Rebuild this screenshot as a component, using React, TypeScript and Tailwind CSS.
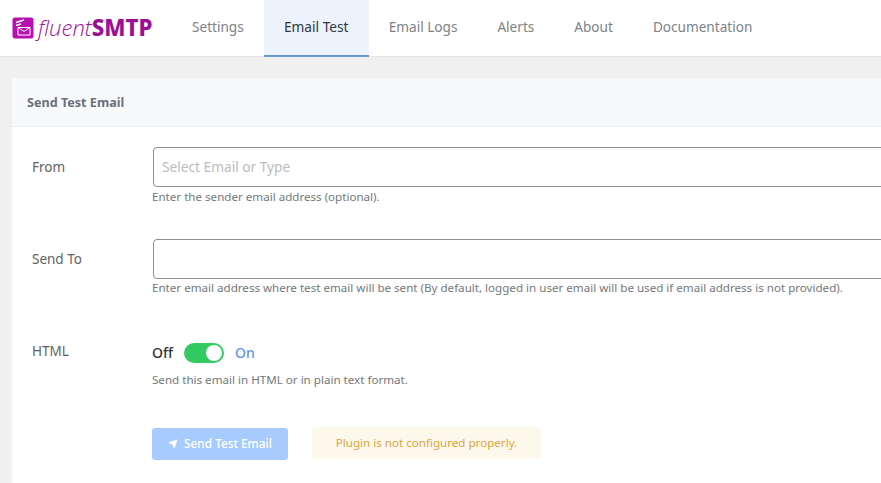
import { Send } from 'lucide-react'

const tabs = ['Settings', 'Email Test', 'Email Logs', 'Alerts', 'About', 'Documentation']

function Logo() {
  return (
    <div className="flex w-[160px] shrink-0 items-center gap-[4px] pb-[1px]">
      <svg width="22" height="22" viewBox="0 0 22 22" className="shrink-0">
        <rect x="0.5" y="0.5" width="21" height="21" rx="2.5" fill="#b70fb0" />
        <path d="M4 5.5 12 3M4 8.5 9 7" stroke="#fff" strokeWidth="1.4" fill="none" />
        <path d="M6 10.5h12v7.5H6zM6 10.5l6 4 6-4" stroke="#fff" strokeWidth="1" fill="none" />
      </svg>
      <span className="font-['Open_Sans'] text-[22px] leading-none font-light whitespace-nowrap text-[#a30f9c] italic">
        fluent
        <b className="font-['Noto_Sans'] text-[22.3px] font-extrabold text-[#9c0f95] not-italic">SMTP</b>
      </span>
    </div>
  )
}

export default function App() {
  return (
    <div className="h-screen w-full overflow-hidden bg-[#f0f0f1] font-['Noto_Sans',sans-serif] text-[13.5px]">
      <header className="flex h-[57px] items-stretch border-b border-[#e5e5e5] bg-white pl-3">
        <Logo />
        {tabs.map((tab) =>
          tab === 'Email Test' ? (
            <div
              key={tab}
              className="-mb-px flex w-[105px] items-center justify-center border-b-2 border-[#6a97d4] bg-[#ecf3fc] pb-[1px] text-[13.7px] text-[#2f3640]"
            >
              {tab}
            </div>
          ) : (
            <div key={tab} className="flex items-center px-5 pb-[1px] text-[13.6px] whitespace-nowrap text-[#7d8288]">
              {tab}
            </div>
          )
        )}
      </header>

      <main className="pt-[21px] pl-3">
        <section className="h-[420px] w-[900px] rounded-tl-[4px] bg-white">
          <h1 className="flex h-[49px] items-center border-b border-[#eceef0] bg-[#f8f9fb] pt-[2px] pl-[15px] text-[12.6px] font-bold text-[#69707f]">
            Send Test Email
          </h1>

          <div className="pt-5 pl-5">
            <div className="flex">
              <label className="w-[121px] pt-[10px] text-[#606266]">From</label>
              <div className="flex-1">
                <div className="flex h-10 items-center rounded-[4px] border border-[#8c8f94] pl-2 text-[13.7px] text-[#b9bcc2]">
                  Select Email or Type
                </div>
                <p className="-ml-px text-[11.6px] leading-5 text-[#73787e]">
                  Enter the sender email address (optional).
                </p>
              </div>
            </div>

            <div className="mt-[32px] flex">
              <label className="w-[121px] pt-[10px] text-[#606266]">Send To</label>
              <div className="flex-1">
                <div className="h-10 rounded-[4px] border border-[#8c8f94]" />
                <p className="-mt-px -ml-px text-[11.6px] leading-5 whitespace-nowrap text-[#73787e]">
                  Enter email address where test email will be sent (By default, logged in user email will be used if email address is not provided).
                </p>
              </div>
            </div>

            <div className="mt-[45px] flex">
              <label className="-mt-[2px] w-[120px] text-[#606266]">HTML</label>
              <div>
                <div className="flex h-5 items-center text-[14px]">
                  <span className="-mt-[2px] w-[32px] font-medium text-[#303133]">Off</span>
                  <span className="flex h-5 w-10 items-center justify-end rounded-full bg-[#34ca62] pr-[2px]">
                    <span className="size-4 rounded-full bg-white" />
                  </span>
                  <span className="-mt-[2px] ml-[11px] font-medium text-[#5b97e6]">On</span>
                </div>
                <p className="pt-[7px] text-[11.6px] leading-5 text-[#73787e]">
                  Send this email in HTML or in plain text format.
                </p>
              </div>
            </div>

            <div className="mt-[38px] ml-[120px] flex items-start gap-6">
              <button className="flex h-8 w-[136px] items-center justify-center gap-[6px] rounded-[3px] bg-[#a7cbfc] text-[11.8px] font-medium text-white">
                <Send size={10} fill="#fff" strokeWidth={1} />
                Send Test Email
              </button>
              <div className="-mt-px flex h-8 w-[229px] items-center justify-center rounded-[4px] bg-[#fdf8ec] text-[11.6px] text-[#e0a43c]">
                Plugin is not configured properly.
              </div>
            </div>
          </div>
        </section>
      </main>
    </div>
  )
}
